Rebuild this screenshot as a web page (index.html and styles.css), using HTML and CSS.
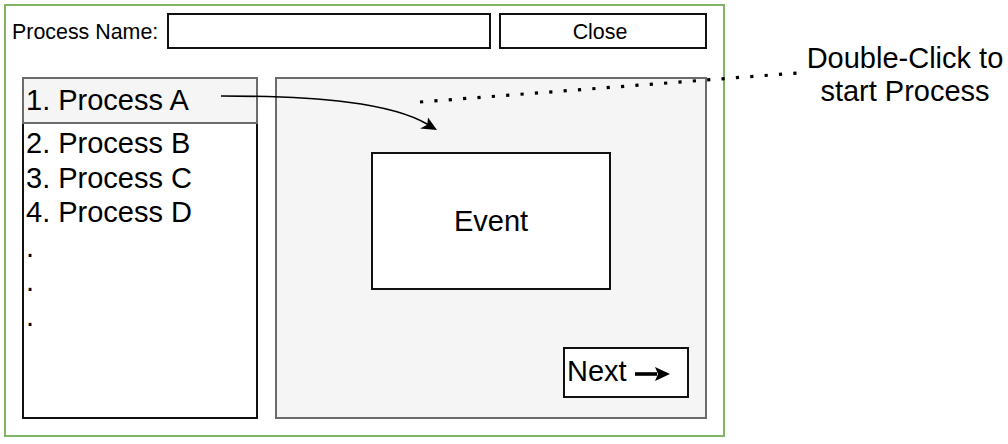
FILE: index.html
```html
<!DOCTYPE html>
<html lang="en">
<head>
<meta charset="utf-8">
<title>Process Runner</title>
<link rel="stylesheet" href="styles.css">
</head>
<body>
<div class="canvas">
  <div class="frame">
    <div class="toolbar">
      <label class="toolbar-label" for="pname">Process Name:</label>
      <input id="pname" class="name-input" type="text">
      <button class="close-btn" type="button">Close</button>
    </div>
    <div class="workspace">
      <div class="process-list">
        <div class="list-head">1. Process A</div>
        <div class="list-body">
          <div>2. Process B</div>
          <div>3. Process C</div>
          <div>4. Process D</div>
          <div>.</div>
          <div>.</div>
          <div>.</div>
        </div>
      </div>
      <div class="panel">
        <div class="event">Event</div>
        <div class="next">Next<svg class="next-arrow" width="36" height="16" viewBox="0 0 36 16"><path d="M0 6.2 H22 V9.8 H0 Z" fill="#000"/><path d="M20 1 L35 8 L20 15 L23 8 Z" fill="#000"/></svg></div>
      </div>
    </div>
  </div>
  <div class="note">Double-Click to<br>start Process</div>
  <svg class="overlay" width="1008" height="444" viewBox="0 0 1008 444">
    <path d="M221 96 C 320 96, 392 103, 428 124.5" fill="none" stroke="#000" stroke-width="1.6"/>
    <path d="M437 130 L420 128.5 L427.3 124.8 L428 117.5 Z" fill="#000"/>
    <line x1="420" y1="102" x2="797" y2="73" stroke="#000" stroke-width="3.2" stroke-dasharray="3.2 11.2"/>
  </svg>
</div>
</body>
</html>
```

FILE: styles.css
```css
* {
  box-sizing: border-box;
}

html,
body {
  margin: 0;
  padding: 0;
  background: #fff;
}

body {
  font-family: "Liberation Sans", Arial, Helvetica, sans-serif;
  color: #000;
}

.canvas {
  position: relative;
  width: 1008px;
  height: 444px;
  overflow: hidden;
}

.frame {
  margin: 4px 0 0 4px;
  width: 721px;
  height: 433px;
  border: 2px solid #82b366;
  display: flex;
  flex-direction: column;
}

.toolbar {
  display: flex;
  height: 36px;
  margin-top: 7px;
}

.toolbar-label {
  width: 161px;
  padding: 2px 0 0 6px;
  font-size: 21.4px;
  display: flex;
  align-items: center;
}

.name-input {
  width: 324px;
  height: 36px;
  margin: 0;
  padding: 0;
  border: 2px solid #111;
  background: #fff;
  outline: none;
}

.close-btn {
  width: 208px;
  height: 36px;
  margin: 0 0 0 8px;
  padding: 2px 6px 0 0;
  border: 2px solid #111;
  background: #fff;
  font-family: inherit;
  font-size: 21.4px;
  color: #000;
}

.workspace {
  display: flex;
  gap: 17px;
  height: 342px;
  margin: 28px 0 0 16px;
}

.process-list {
  width: 236px;
  display: flex;
  flex-direction: column;
}

.list-head {
  height: 47px;
  background: #f5f5f5;
  border: 2px solid #6b6b6b;
  font-size: 29px;
  line-height: 34.5px;
  padding-left: 2px;
  display: flex;
  align-items: center;
}

.list-body {
  flex: 1;
  border: 2px solid #111;
  border-top: none;
  font-size: 29px;
  line-height: 34.5px;
  padding: 2px 0 0 2px;
  background: #fff;
}

.panel {
  width: 432px;
  background: #f5f5f5;
  border: 2px solid #6b6b6b;
  display: flex;
  flex-direction: column;
  align-items: center;
  padding-top: 73px;
}

.event {
  width: 240px;
  height: 138px;
  background: #fff;
  border: 2px solid #111;
  display: flex;
  align-items: center;
  justify-content: center;
  font-size: 29px;
  line-height: 34px;
}

.next {
  margin-top: auto;
  align-self: flex-end;
  margin-right: 16px;
  margin-bottom: 19px;
  width: 126px;
  height: 51px;
  background: #fff;
  border: 2px solid #111;
  font-size: 29px;
  line-height: 34px;
  padding: 5px 0 0 2px;
  white-space: nowrap;
}

.next-arrow {
  margin-left: 8px;
  vertical-align: -1px;
}

.note {
  position: absolute;
  left: 795px;
  top: 42px;
  width: 220px;
  text-align: center;
  font-size: 29px;
  line-height: 32.5px;
  white-space: nowrap;
}

.overlay {
  position: absolute;
  left: 0;
  top: 0;
  pointer-events: none;
}
```
